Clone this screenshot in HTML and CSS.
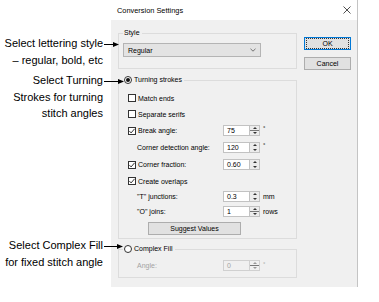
FILE: index.html
```html
<!DOCTYPE html>
<html lang="en">
<head>
    <meta charset="UTF-8">
    <meta name="viewport" content="width=device-width, initial-scale=1.0">
    <title>Conversion Settings</title>
    <link rel="stylesheet" href="styles.css">
</head>
<body>
    <div class="figure">
        <!-- callouts on the left -->
        <div class="callout callout-style">
            <div class="callout-text">Select lettering style<br>– regular, bold, etc</div>
            <svg class="callout-arrow" width="15" height="7" viewBox="0 0 15 7">
                <line x1="0" y1="3.5" x2="11" y2="3.5" stroke="#000" stroke-width="1"/>
                <polygon points="9,1 15,3.5 9,6" fill="#000"/>
            </svg>
        </div>
        <div class="callout callout-turning">
            <div class="callout-text">Select Turning<br>Strokes for turning<br>stitch angles</div>
            <svg class="callout-arrow" width="20" height="7" viewBox="0 0 20 7">
                <line x1="0" y1="3.5" x2="16" y2="3.5" stroke="#000" stroke-width="1"/>
                <polygon points="14,1 20,3.5 14,6" fill="#000"/>
            </svg>
        </div>
        <div class="callout callout-complex">
            <div class="callout-text">Select Complex Fill<br>for fixed stitch angle</div>
            <svg class="callout-arrow" width="19" height="7" viewBox="0 0 19 7">
                <line x1="0" y1="3.5" x2="15" y2="3.5" stroke="#000" stroke-width="1"/>
                <polygon points="13,1 19,3.5 13,6" fill="#000"/>
            </svg>
        </div>

        <div class="dialog">
            <div class="title-bar">
                <span class="title">Conversion Settings</span>
                <svg class="close-icon" width="8" height="8" viewBox="0 0 8 8">
                    <path d="M0.5 0.5 L7.5 7.5 M7.5 0.5 L0.5 7.5" stroke="#222" stroke-width="0.8"/>
                </svg>
            </div>

            <div class="dialog-body">
                <div class="groups">
                    <div class="group group-style">
                        <div class="group-title">Style</div>
                        <div class="select">
                            <span>Regular</span>
                            <svg width="6" height="4" viewBox="0 0 6 4">
                                <path d="M0.5 0.8 L3 3.2 L5.5 0.8" fill="none" stroke="#555" stroke-width="0.8"/>
                            </svg>
                        </div>
                    </div>

                    <div class="group group-turning">
                        <div class="group-title"><span class="radio checked"></span>Turning strokes</div>
                        <div class="rows">
                            <div class="row row-16"><span class="label"><span class="check"></span>Match ends</span></div>
                            <div class="row row-16"><span class="label"><span class="check"></span>Separate serifs</span></div>
                            <div class="row row-17">
                                <span class="label"><span class="check checked"><svg width="8" height="8" viewBox="0 0 8 8"><path d="M1.4 4.1 L3.1 5.9 L6.6 1.8" fill="none" stroke="#000" stroke-width="0.8"/></svg></span>Break angle:</span>
                                <span class="spin"><span class="spin-field">75</span><span class="spin-btns"></span></span>
                                <span class="unit deg">°</span>
                            </div>
                            <div class="row row-17">
                                <span class="label indent">Corner detection angle:</span>
                                <span class="spin"><span class="spin-field">120</span><span class="spin-btns"></span></span>
                                <span class="unit deg">°</span>
                            </div>
                            <div class="row row-17">
                                <span class="label"><span class="check checked"><svg width="8" height="8" viewBox="0 0 8 8"><path d="M1.4 4.1 L3.1 5.9 L6.6 1.8" fill="none" stroke="#000" stroke-width="0.8"/></svg></span>Corner fraction:</span>
                                <span class="spin"><span class="spin-field">0.60</span><span class="spin-btns"></span></span>
                            </div>
                            <div class="row row-16">
                                <span class="label"><span class="check checked"><svg width="8" height="8" viewBox="0 0 8 8"><path d="M1.4 4.1 L3.1 5.9 L6.6 1.8" fill="none" stroke="#000" stroke-width="0.8"/></svg></span>Create overlaps</span>
                            </div>
                            <div class="row row-15">
                                <span class="label indent">"T" junctions:</span>
                                <span class="spin"><span class="spin-field">0.3</span><span class="spin-btns"></span></span>
                                <span class="unit">mm</span>
                            </div>
                            <div class="row row-15">
                                <span class="label indent">"O" joins:</span>
                                <span class="spin"><span class="spin-field">1</span><span class="spin-btns"></span></span>
                                <span class="unit">rows</span>
                            </div>
                            <button class="btn btn-suggest">Suggest Values</button>
                        </div>
                    </div>

                    <div class="group group-complex">
                        <div class="group-title"><span class="radio"></span>Complex Fill</div>
                        <div class="rows">
                            <div class="row row-15 disabled">
                                <span class="label indent">Angle:</span>
                                <span class="spin"><span class="spin-field">0</span><span class="spin-btns"></span></span>
                                <span class="unit deg">°</span>
                            </div>
                        </div>
                    </div>
                </div>

                <div class="buttons">
                    <button class="btn btn-default"><span class="focus-ring">OK</span></button>
                    <button class="btn">Cancel</button>
                </div>
            </div>
        </div>
    </div>
</body>
</html>
```

FILE: styles.css
```css
* {
    box-sizing: border-box;
}

body {
    margin: 0;
    background-color: #ffffff;
    font-family: "Liberation Sans", Arial, sans-serif;
    color: #000000;
}

.figure {
    position: relative;
    width: 379px;
    height: 302px;
}

/* Callouts */

.callout {
    position: absolute;
    left: 0;
    display: flex;
    align-items: flex-start;
}

.callout-style { top: 35px; }
.callout-turning { top: 72px; }
.callout-complex { top: 237px; }

.callout-text {
    width: 103px;
    text-align: right;
    font-size: 11px;
    line-height: 16.5px;
}

.callout-arrow {
    margin-top: 6px;
    margin-left: 1px;
}

/* Dialog */

.dialog {
    margin-left: 111px;
    width: 247px;
    height: 287px;
    border-right: 1px solid #c4c4c4;
    display: flex;
    flex-direction: column;
    font-size: 7px;
}

.title-bar {
    height: 20px;
    display: flex;
    align-items: center;
    justify-content: space-between;
    padding: 0 6px 0 6px;
    background-color: #ffffff;
}

.title {
    font-size: 7.4px;
}

.dialog-body {
    flex: 1;
    display: flex;
    gap: 7px;
    padding: 13px 0 0 7px;
    background-color: #f0f0f0;
}

.groups {
    width: 179px;
    display: flex;
    flex-direction: column;
}

.group {
    border: 1px solid #dcdcdc;
    padding: 0 0 0 4px;
}

.group-title {
    display: flex;
    width: fit-content;
    align-items: center;
    gap: 2px;
    height: 10px;
    line-height: 10px;
    margin-top: -6px;
    padding: 0 2px 0 1px;
    background-color: #f0f0f0;
}

.group-style {
    height: 36px;
}

.group-turning {
    height: 159px;
    margin-top: 11px;
}

.group-complex {
    height: 29px;
    margin-top: 10px;
}

.select {
    margin-top: 5px;
    width: 138px;
    height: 14px;
    display: flex;
    align-items: center;
    justify-content: space-between;
    padding: 0 4px 0 4px;
    background-color: #e3e3e3;
    border: 1px solid #b4b4b4;
}

.rows {
    margin-top: 5px;
    padding-left: 5px;
}

.group-complex .rows {
    margin-top: 4px;
}

.row {
    display: grid;
    grid-template-columns: 95px 37px auto;
    align-items: center;
}

.row-15 { height: 15px; }
.row-16 { height: 16px; }
.row-17 { height: 17px; }

.label {
    display: flex;
    align-items: center;
    gap: 2px;
    white-space: nowrap;
}

.label.indent {
    padding-left: 9px;
}

.check {
    width: 8px;
    height: 8px;
    border: 1px solid #333333;
    background-color: #ffffff;
    display: flex;
}

.check svg {
    margin: -1px;
}

.radio {
    width: 8px;
    height: 8px;
    border: 1px solid #333333;
    border-radius: 50%;
    background-color: #ffffff;
    display: flex;
    align-items: center;
    justify-content: center;
}

.radio.checked::after {
    content: "";
    width: 4px;
    height: 4px;
    border-radius: 50%;
    background-color: #111111;
}

/* Spin boxes */

.spin {
    display: flex;
    height: 11px;
}

.spin-field {
    width: 27px;
    height: 11px;
    line-height: 9px;
    padding-left: 3px;
    background-color: #ffffff;
    border: 1px solid #c2c2c2;
}

.spin-btns {
    width: 10px;
    height: 11px;
    border: 1px solid #c2c2c2;
    border-left: none;
    background-color: #ececec;
    background-image:
        linear-gradient(to bottom, transparent 4.5px, #777 4.5px, #777 5.3px, transparent 5.3px);
    position: relative;
}

.spin-btns::before,
.spin-btns::after {
    content: "";
    position: absolute;
    left: 2.5px;
    border-left: 2px solid transparent;
    border-right: 2px solid transparent;
}

.spin-btns::before {
    top: 1px;
    border-bottom: 2.5px solid #333;
}

.spin-btns::after {
    bottom: 1px;
    border-top: 2.5px solid #333;
}

.unit {
    margin-left: 3px;
}

.unit.deg {
    font-size: 6px;
    align-self: start;
    margin-top: 3px;
}

.disabled {
    color: #a3a3a3;
}

.disabled .spin-field {
    background-color: #f0f0f0;
    border-color: #d0d0d0;
}

.disabled .spin-btns {
    border-color: #d0d0d0;
    background-color: #f0f0f0;
}

.disabled .spin-btns::before { border-bottom-color: #999; }
.disabled .spin-btns::after { border-top-color: #999; }

/* Buttons */

.btn {
    font-family: inherit;
    font-size: 7px;
    color: #000000;
    height: 13px;
    padding: 0;
    background-color: #e1e1e1;
    border: 1px solid #adadad;
    display: flex;
    align-items: center;
    justify-content: center;
}

.buttons {
    margin-top: 4px;
    width: 47px;
    display: flex;
    flex-direction: column;
    gap: 7px;
}

.btn-default {
    border-color: #0078d7;
}

.focus-ring {
    width: 100%;
    height: 100%;
    margin: 1px;
    display: flex;
    align-items: center;
    justify-content: center;
    outline: 1px dotted #333;
    outline-offset: -1px;
}

.btn-suggest {
    width: 93px;
    margin: 3px 0 0 20px;
}
```
